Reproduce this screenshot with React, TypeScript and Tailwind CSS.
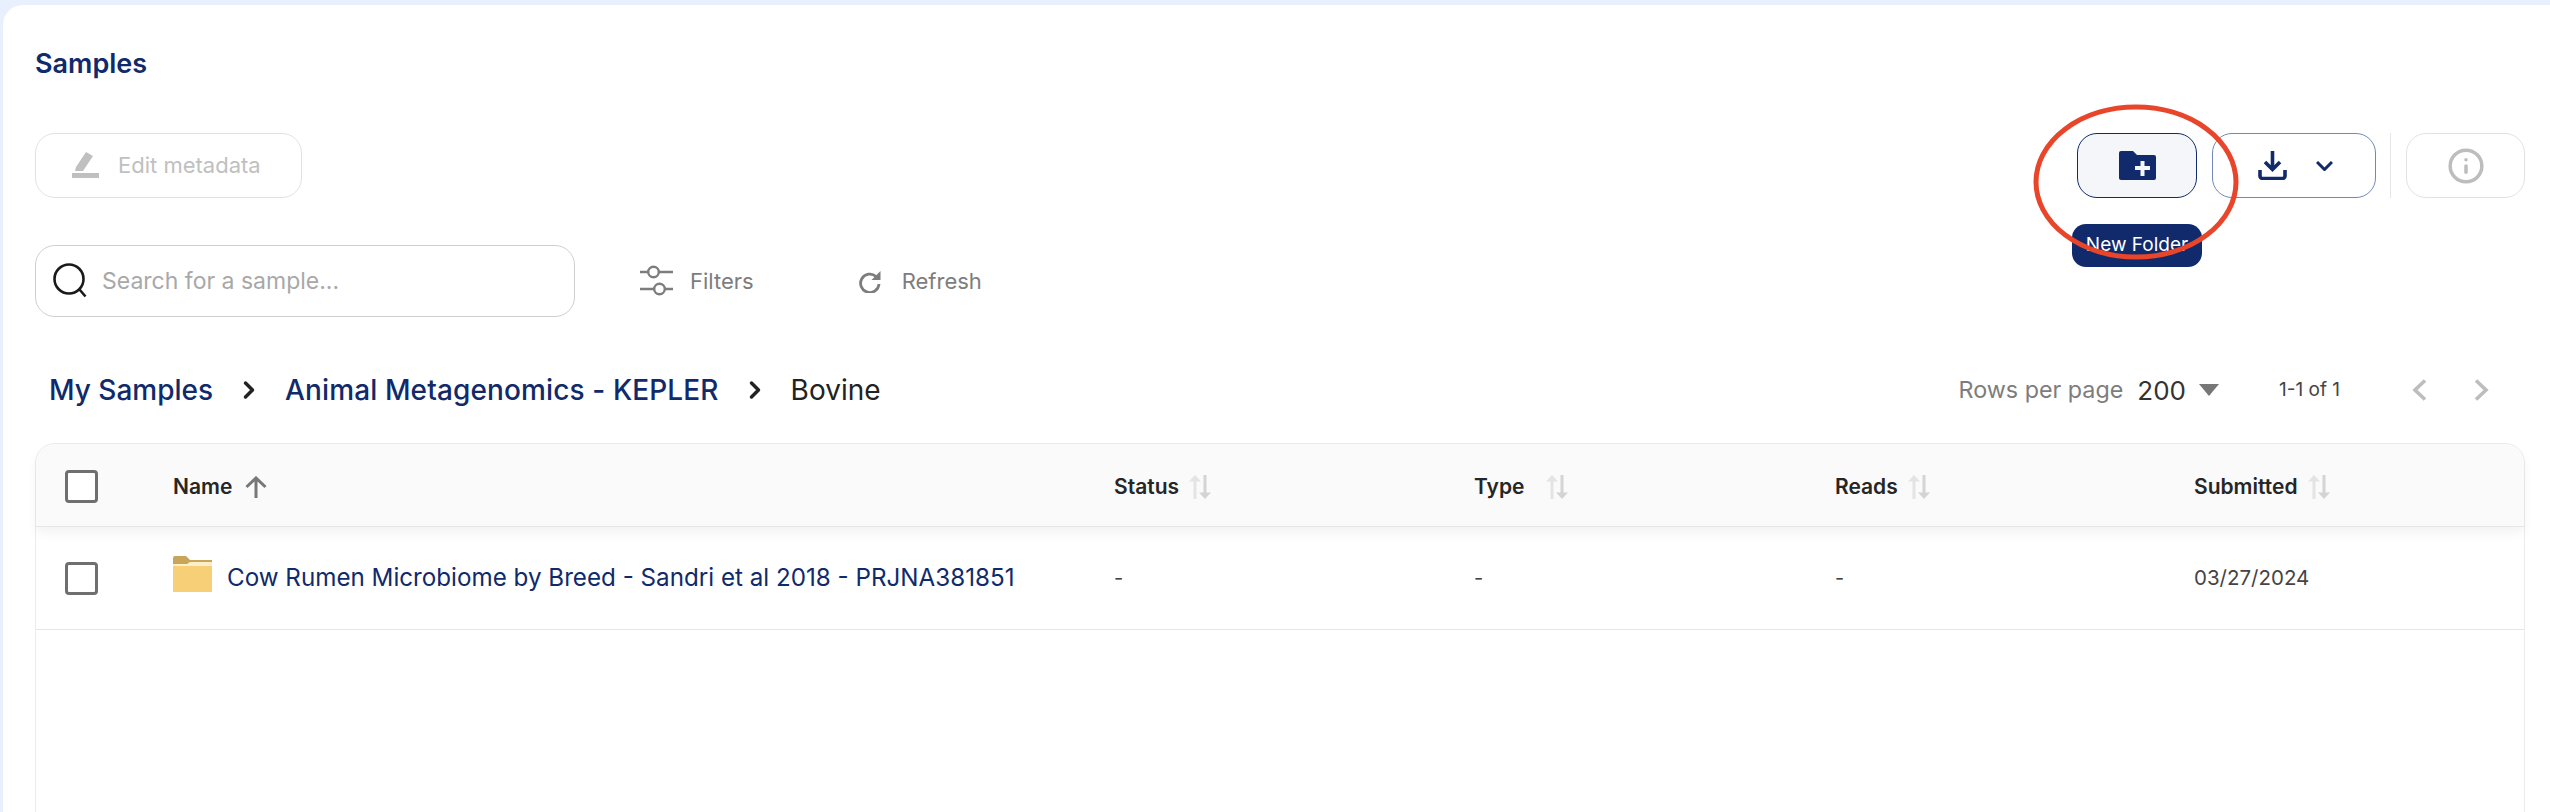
import { ChevronRight, Info } from "lucide-react";

const navy = "#102a6b";

function SortIcon() {
	return (
		<svg width="22" height="24" viewBox="0 0 22 24" className="ml-[10px]">
			<path d="M4.5 24V5H7.5V24z" fill="#e4e4e4" />
			<path d="M0 6.5L6 0l6 6.5z" fill="#e4e4e4" />
			<path d="M14.5 0V18H17.5V0z" fill="#d4d4d4" />
			<path d="M10 17.5h12L16 24z" fill="#d4d4d4" />
		</svg>
	);
}

function Checkbox() {
	return <div className="w-[33px] h-[33px] rounded-[4px] border-[3.5px] border-[#6f6f6f] bg-white" />;
}

function HeaderCell({ label, gap }: { label: string; gap?: boolean }) {
	return (
		<div className="flex items-center text-[21px] font-semibold text-[#262626]">
			<span>{label}</span>
			{gap && <span className="w-[12px]" />}
			<SortIcon />
		</div>
	);
}

function PagerChevron({ flip }: { flip?: boolean }) {
	return (
		<svg width="15" height="22" viewBox="0 0 15 22" fill="none" stroke="#bdbdbd" strokeWidth="3.6" className={flip ? "rotate-180" : ""}>
			<path d="M13 1.5L3 11l10 9.5" />
		</svg>
	);
}

export default function App() {
	return (
		<div className="h-[812px] overflow-hidden bg-[#e8f0fd] pt-[5px] pl-[3px] font-['Inter',sans-serif]">
			<div className="relative h-full rounded-tl-[20px] bg-white pl-[32px] pr-[25px]">
				<h1 className="pt-[43px] text-[27px] leading-[32px] font-semibold text-[#102a6b]">Samples</h1>

				<div className="mt-[53px] flex items-center justify-between">
					<button className="flex h-[65px] w-[267px] items-center rounded-[20px] border border-[#e2e2e2] pl-[36px] text-[22px] text-[#c0c0c0]">
						<svg width="28" height="28" viewBox="0 0 28 28" className="mr-[18px]" fill="#c0c0c0">
							<path d="M0 21h27v5H0zM14 0l7 4-10 15H3l1-4z" />
						</svg>
						Edit metadata
					</button>
					<div className="flex items-center">
						<button className="flex h-[65px] w-[120px] items-center justify-center rounded-[20px] border border-[#102a6b] bg-[#f4f6f9]">
							<svg width="37" height="29" viewBox="0 0 37 29">
								<path
									fill={navy}
									d="M2 0h12l4 4h17a2 2 0 0 1 2 2v21a2 2 0 0 1-2 2H2a2 2 0 0 1-2-2V2a2 2 0 0 1 2-2z"
								/>
								<path stroke="#f4f6f9" strokeWidth="4" d="M16 17h15M23.5 10v15" />
							</svg>
						</button>
						<button className="ml-[15px] flex h-[65px] w-[164px] items-center rounded-[20px] border border-[#7388b8] pl-[45px]">
							<svg width="29" height="29" viewBox="0 0 29 29" fill="none" stroke={navy} strokeWidth="3.6">
								<path d="M14.5 0v18M7 11l7.5 7.5L22 11" />
								<path d="M2 19v6a2.5 2.5 0 0 0 2.5 2.5h20A2.5 2.5 0 0 0 27 25v-6" />
							</svg>
							<svg width="17" height="10" viewBox="0 0 17 10" fill="none" stroke={navy} strokeWidth="3" className="ml-[29px]">
								<path d="M1 1l7.5 7.5L16 1" />
							</svg>
						</button>
						<div className="ml-[14px] mr-[15px] h-[65px] w-px bg-[#e6e6e6]" />
						<button className="flex h-[65px] w-[119px] items-center justify-center rounded-[20px] border border-[#e2e2e2]">
							<Info size={38} color="#bdbdbd" strokeWidth={2.2} />
						</button>
					</div>
				</div>

				{/* tooltip + red annotation sit over the toolbar */}
				<div className="absolute left-[2069px] top-[219px] flex h-[43px] w-[130px] items-center justify-center rounded-[14px] bg-[#102a6b] text-[19px] text-white">
					New Folder
				</div>
				<svg width="215" height="165" viewBox="0 0 215 165" fill="none" className="absolute left-[2026px] top-[98px]">
					<ellipse cx="107" cy="79" rx="100" ry="75" stroke="#e8452a" strokeWidth="5" />
				</svg>

				<div className="mt-[47px] flex items-center">
					<div className="flex h-[72px] w-[540px] items-center rounded-[20px] border border-[#cfcfcf] pl-[16px] text-[23px] text-[#a8a8a8]">
						<svg width="38" height="38" viewBox="0 0 38 38" fill="none" stroke="#1a1a1a" strokeWidth="2.6" className="mr-[12px]">
							<circle cx="17" cy="17" r="14.5" />
							<path d="M27.5 27.5l6 7" />
						</svg>
						Search for a sample...
					</div>
					<div className="ml-[65px] flex items-center text-[22px] text-[#7d7d7d]">
						<svg width="33" height="32" viewBox="0 0 33 32" fill="none" stroke="#7d7d7d" strokeWidth="2.4" className="mr-[17px]">
							<path d="M0 7h8M19 7h14M0 24h14M25 24h8" />
							<circle cx="13.5" cy="7" r="5.3" />
							<circle cx="19.5" cy="24" r="5.3" />
						</svg>
						Filters
					</div>
					<div className="ml-[105px] flex items-center text-[22px] text-[#7d7d7d]">
						<svg width="22" height="23" viewBox="0 0 22 23" fill="none" className="mr-[21px]">
							<path d="M17 6.5A9.2 9.2 0 1 0 20 14" stroke="#7d7d7d" strokeWidth="2.8" />
							<path d="M21.5 1v9h-9z" fill="#7d7d7d" />
						</svg>
						Refresh
					</div>
				</div>

				<div className="mt-[50px] flex h-[46px] items-center justify-between pl-[14px]">
					<div className="flex items-center text-[28px] font-medium text-[#102a6b]">
						<span>My Samples</span>
						<ChevronRight size={28} color="#222" strokeWidth={3} className="mx-[22px]" />
						<span className="tracking-[0.12px]">Animal Metagenomics - KEPLER</span>
						<ChevronRight size={28} color="#222" strokeWidth={3} className="mx-[22px]" />
						<span className="font-normal text-[#222]">Bovine</span>
					</div>
					<div className="flex items-center pr-[36px]">
						<span className="text-[23.3px] text-[#7d7d7d]">Rows per page</span>
						<span className="ml-[14px] text-[26px] text-[#333]">200</span>
						<svg width="20" height="12" viewBox="0 0 20 12" className="ml-[13px]">
							<path d="M0 0h20L10 12z" fill="#777" />
						</svg>
						<span className="ml-[60px] text-[19px] text-[#444]">1-1 of 1</span>
						<div className="ml-[72px]">
							<PagerChevron />
						</div>
						<div className="ml-[47px]">
							<PagerChevron flip />
						</div>
					</div>
				</div>

				<div className="mt-[30px] h-[400px] rounded-t-[20px] border border-[#ececec]">
					<div className="grid h-[83px] grid-cols-[137px_941px_360px_361px_359px_1fr] items-center rounded-t-[20px] border-b border-[#e6e6e6] bg-[#fafafa] pt-[3px] shadow-[0_6px_12px_rgba(0,0,0,0.05)]">
						<div className="pl-[29px]">
							<Checkbox />
						</div>
						<div className="flex items-center text-[21px] font-semibold text-[#262626]">
							Name
							<svg width="22" height="22" viewBox="0 0 22 22" fill="none" stroke="#777" strokeWidth="3" className="ml-[13px]">
								<path d="M11 22V2M1.5 11L11 2l9.5 9" />
							</svg>
						</div>
						<HeaderCell label="Status" />
						<HeaderCell label="Type" gap />
						<HeaderCell label="Reads" />
						<HeaderCell label="Submitted" />
					</div>
					<div className="grid h-[103px] grid-cols-[137px_941px_360px_361px_359px_1fr] items-center border-b border-[#e6e6e6]">
						<div className="pl-[29px]">
							<Checkbox />
						</div>
						<div className="flex items-center text-[24.2px] text-[#102a6b]">
							<svg width="39" height="36" viewBox="0 0 39 36" className="mr-[15px] -mt-[8px]">
								<path d="M0 2a2 2 0 0 1 2-2h11l4 4h22v6H0z" fill="#c9a55a" />
								<path d="M0 8h14l3-2h22v5H0z" fill="#fbeecb" />
								<path d="M0 10h39v26H0z" fill="#f7cf77" />
							</svg>
							Cow Rumen Microbiome by Breed - Sandri et al 2018 - PRJNA381851
						</div>
						<div className="text-[20px] text-[#444]">-</div>
						<div className="text-[20px] text-[#444]">-</div>
						<div className="text-[20px] text-[#444]">-</div>
						<div className="text-[20.5px] text-[#444]">03/27/2024</div>
					</div>
				</div>
			</div>
		</div>
	);
}
